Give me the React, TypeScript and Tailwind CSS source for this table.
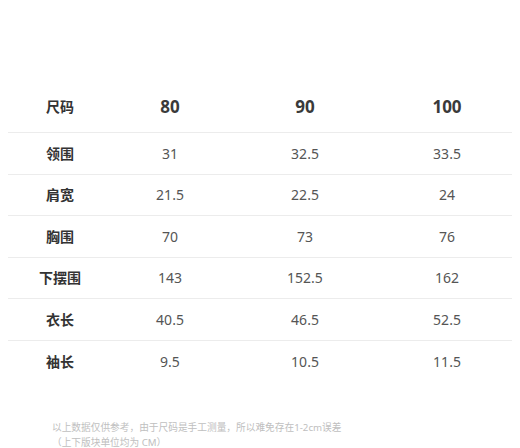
import React from 'react';

const sizes = ['80', '90', '100'];

const rows: { label: string; values: string[] }[] = [
  { label: '领围', values: ['31', '32.5', '33.5'] },
  { label: '肩宽', values: ['21.5', '22.5', '24'] },
  { label: '胸围', values: ['70', '73', '76'] },
  { label: '下摆围', values: ['143', '152.5', '162'] },
  { label: '衣长', values: ['40.5', '46.5', '52.5'] },
  { label: '袖长', values: ['9.5', '10.5', '11.5'] },
];

const font = { fontFamily: '"Noto Sans", "Noto Sans CJK SC", sans-serif' };

export default function App() {
  return (
    <div className="w-[520px] h-[448px] bg-white overflow-hidden" style={font}>
      <div className="pt-[81px] pl-[8px] w-[512px]">
        {/* header */}
        <div className="grid grid-cols-[104px_116px_154px_130px] h-[52px] items-center border-b border-[#ececec]">
          <span className="text-center text-[14px] font-bold text-[#333]">尺码</span>
          {sizes.map((s) => (
            <span key={s} className="text-center text-[17px] font-bold text-[#3a3a3a]">
              {s}
            </span>
          ))}
        </div>

        {/* body */}
        {rows.map((r, i) => (
          <div
            key={r.label}
            className={`grid grid-cols-[104px_116px_154px_130px] h-[41.5px] items-center ${
              i < rows.length - 1 ? 'border-b border-[#ececec]' : ''
            }`}
          >
            <span className="text-center text-[14px] font-bold text-[#333]">{r.label}</span>
            {r.values.map((v, j) => (
              <span key={j} className="text-center text-[14px] text-[#555]">
                {v}
              </span>
            ))}
          </div>
        ))}
      </div>

      {/* note */}
      <div className="mt-[38px] pl-[52px] text-[9.7px] leading-[15px] text-[#c0c0c0]">
        <p>以上数据仅供参考，由于尺码是手工测量，所以难免存在1-2cm误差</p>
        <p>（上下版块单位均为 CM）</p>
      </div>
    </div>
  );
}
